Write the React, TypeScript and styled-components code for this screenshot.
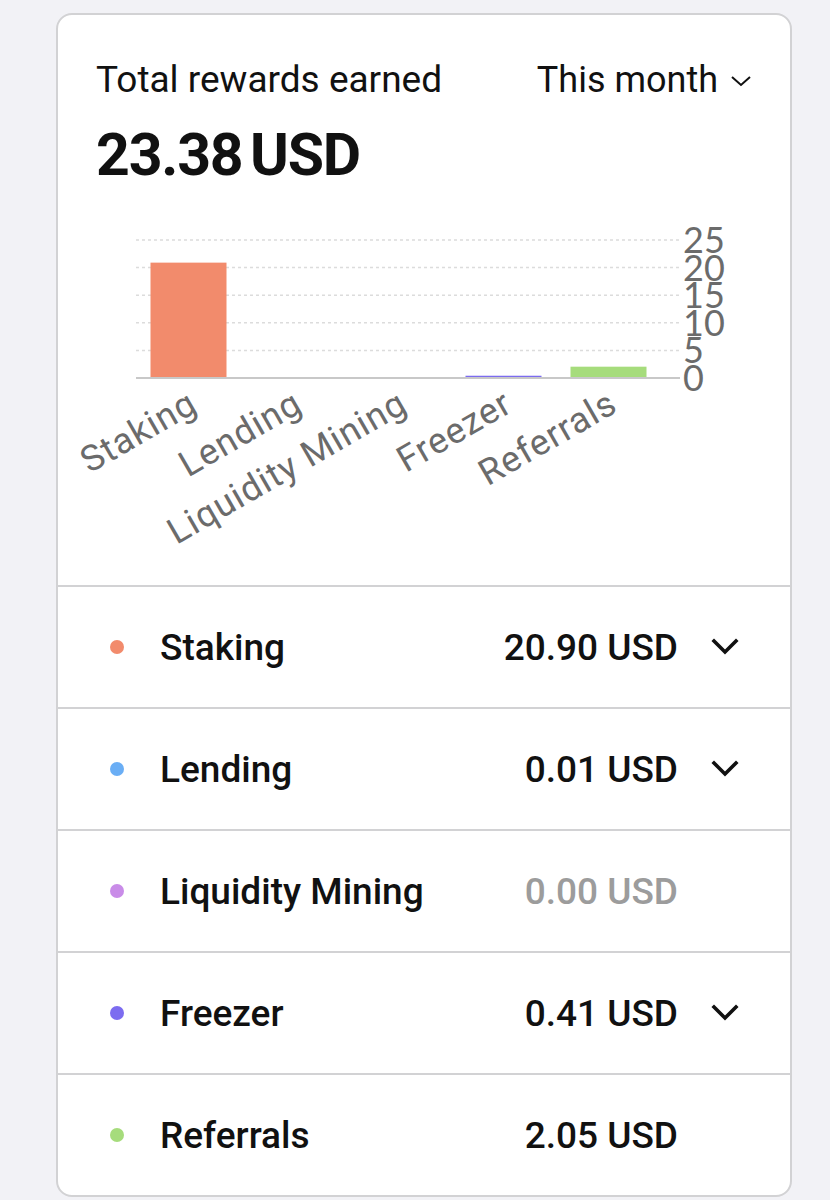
import React from "react";
import styled, { createGlobalStyle } from "styled-components";

const GlobalStyle = createGlobalStyle`
  html, body {
    margin: 0;
    padding: 0;
    background: #f2f2f6;
  }
  body {
    font-family: Roboto, "Noto Sans", Arial, sans-serif;
    color: #111;
  }
`;

type Reward = {
  name: string;
  value: number;
  color: string;
  expandable: boolean;
};

const rewards: Reward[] = [
  { name: "Staking", value: 20.9, color: "#f28b6c", expandable: true },
  { name: "Lending", value: 0.01, color: "#6aaef5", expandable: true },
  { name: "Liquidity Mining", value: 0, color: "#c98ce8", expandable: false },
  { name: "Freezer", value: 0.41, color: "#7c6cf0", expandable: true },
  { name: "Referrals", value: 2.05, color: "#a6dc7c", expandable: false },
];

// chart geometry, in svg units
const CHART_LEFT = 78;
const CHART_RIGHT = 622;
const ZERO_Y = 188;
const PX_PER_UNIT = 5.52;
const BAND = 105;
const BAR_W = 76;
const TICKS = [0, 5, 10, 15, 20, 25];

function RewardsChart() {
  return (
    <ChartSvg viewBox="0 0 732 395" width="732" height="395">
      {TICKS.filter((t) => t > 0).map((t) => (
        <line
          key={t}
          x1={CHART_LEFT}
          x2={CHART_RIGHT}
          y1={ZERO_Y - t * PX_PER_UNIT}
          y2={ZERO_Y - t * PX_PER_UNIT}
          stroke="#dcdcdc"
          strokeWidth="1.5"
          strokeDasharray="3 3"
        />
      ))}
      {rewards.map((r, i) => {
        const h = Math.max(r.value * PX_PER_UNIT, r.value > 0.1 ? 2 : 0);
        return (
          <rect
            key={r.name}
            x={CHART_LEFT + i * BAND + (BAND - BAR_W) / 2}
            y={ZERO_Y - h}
            width={BAR_W}
            height={h}
            fill={r.color}
          />
        );
      })}
      <line
        x1={CHART_LEFT}
        x2={CHART_RIGHT}
        y1={ZERO_Y}
        y2={ZERO_Y}
        stroke="#c8c8c8"
        strokeWidth="2"
      />
      {TICKS.map((t) => (
        <YTick key={t} x={CHART_RIGHT + 3} y={ZERO_Y - t * PX_PER_UNIT} dy="0.36em">
          {t}
        </YTick>
      ))}
      {rewards.map((r, i) => {
        const cx = CHART_LEFT + i * BAND + BAND / 2 - 2;
        const y = ZERO_Y + 10;
        return (
          <XTick
            key={r.name}
            x={cx}
            y={y}
            dy="0.72em"
            textAnchor="end"
            transform={`rotate(-30 ${cx} ${y})`}
          >
            {r.name}
          </XTick>
        );
      })}
    </ChartSvg>
  );
}

function Chevron({ small }: { small?: boolean }) {
  if (small) {
    return (
      <SmallChevron viewBox="0 0 22 12" width="22" height="12">
        <path d="M2 2 L11 10 L20 2" fill="none" stroke="#111" strokeWidth="2" />
      </SmallChevron>
    );
  }
  return (
    <RowChevron viewBox="0 0 30 18" width="30" height="18">
      <path
        d="M4 3 L15 14 L26 3"
        fill="none"
        stroke="#111"
        strokeWidth="3.6"
        strokeLinecap="square"
      />
    </RowChevron>
  );
}

export default function App() {
  return (
    <>
      <GlobalStyle />
      <Card>
        <Top>
          <TitleRow>
            <Title>Total rewards earned</Title>
            <PeriodButton type="button">
              This month
              <Chevron small />
            </PeriodButton>
          </TitleRow>
          <Amount>23.38 USD</Amount>
        </Top>
        <RewardsChart />
        <List>
          {rewards.map((r) => (
            <Row key={r.name}>
              <Dot $color={r.color} />
              <RowLabel>{r.name}</RowLabel>
              <RowValue $muted={r.value === 0}>{r.value.toFixed(2)} USD</RowValue>
              <ChevronSlot>{r.expandable && <Chevron />}</ChevronSlot>
            </Row>
          ))}
        </List>
      </Card>
    </>
  );
}

const Card = styled.div`
  box-sizing: border-box;
  width: 736px;
  margin: 13px 0 0 56px;
  background: #fff;
  border: 2px solid #d2d2d4;
  border-radius: 16px;
  overflow: hidden;
`;

const Top = styled.div`
  padding: 45px 38px 0 38px;
`;

const TitleRow = styled.div`
  display: flex;
  align-items: center;
  justify-content: space-between;
`;

const Title = styled.span`
  font-size: 37px;
  line-height: 40px;
  font-weight: 400;
`;

const PeriodButton = styled.button`
  display: flex;
  align-items: center;
  gap: 12px;
  padding: 0;
  border: 0;
  background: none;
  font-family: inherit;
  font-size: 36px;
  line-height: 40px;
  color: #111;
  cursor: pointer;
`;

const SmallChevron = styled.svg`
  display: block;
  margin-top: 2px;
`;

const Amount = styled.div`
  margin-top: 20px;
  font-size: 59px;
  line-height: 70px;
  font-weight: 700;
  letter-spacing: -1.2px;
  word-spacing: -6px;
`;

const ChartSvg = styled.svg`
  display: block;
`;

const YTick = styled.text`
  font-family: Lato, Roboto, sans-serif;
  font-size: 36px;
  fill: #6b6b6b;
`;

const XTick = styled.text`
  font-family: Roboto, "Noto Sans", sans-serif;
  font-size: 36px;
  letter-spacing: 1px;
  fill: #6b6b6b;
`;

const List = styled.div`
  border-top: 2px solid #d2d2d4;
`;

const Row = styled.div`
  height: 120px;
  display: flex;
  align-items: center;
  padding: 0 50px 0 52px;
  & + & {
    border-top: 2px solid #d2d2d4;
  }
`;

const Dot = styled.span<{ $color: string }>`
  width: 14px;
  height: 14px;
  border-radius: 50%;
  background: ${(p) => p.$color};
  flex: none;
`;

const RowLabel = styled.span`
  margin-left: 36px;
  flex: 1;
  font-size: 37px;
  font-weight: 500;
`;

const RowValue = styled.span<{ $muted: boolean }>`
  font-size: 37px;
  font-weight: 500;
  color: ${(p) => (p.$muted ? "#9c9c9c" : "#111")};
`;

const ChevronSlot = styled.span`
  width: 30px;
  height: 18px;
  margin-left: 32px;
  flex: none;
`;

const RowChevron = styled.svg`
  display: block;
`;
